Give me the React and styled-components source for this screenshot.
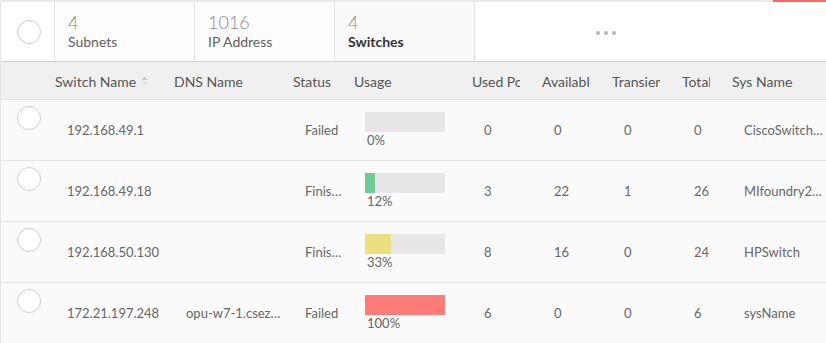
import React from 'react';
import styled, { createGlobalStyle } from 'styled-components';

const GlobalStyle = createGlobalStyle`
  body {
    margin: 0;
    background: #fff;
    font-family: Lato, "Open Sans", sans-serif;
  }
`;

const COLS = '45px 119px 119px 61px 118px 70px 70px 70px 50px 104px';

const tabs = [
  { count: 4, label: 'Subnets' },
  { count: 1016, label: 'IP Address' },
  { count: 4, label: 'Switches', active: true },
];

const columns = ['Switch Name', 'DNS Name', 'Status', 'Usage', 'Used Ports', 'Available', 'Transient', 'Total', 'Sys Name'];

const rows = [
  { name: '192.168.49.1', dns: '', status: 'Failed', usage: 0, used: 0, avail: 0, trans: 0, total: 0, sys: 'CiscoSwitch-Core-01' },
  { name: '192.168.49.18', dns: '', status: 'Finished', usage: 12, used: 3, avail: 22, trans: 1, total: 26, sys: 'MIfoundry24-Edge' },
  { name: '192.168.50.130', dns: '', status: 'Finished', usage: 33, used: 8, avail: 16, trans: 0, total: 24, sys: 'HPSwitch' },
  { name: '172.21.197.248', dns: 'opu-w7-1.csez.zohocorpin.com', status: 'Failed', usage: 100, used: 6, avail: 0, trans: 0, total: 6, sys: 'sysName' },
];

const barColor = pct => {
  if (pct >= 80) return '#ff7b78';
  if (pct >= 25) return '#ebe07f';
  return '#6ccb96';
};

export default function App() {
  return (
    <Page>
      <GlobalStyle />
      <TopStrip>
        <RedMark />
      </TopStrip>

      <TabBar>
        <CheckCell>
          <Circle />
        </CheckCell>
        {tabs.map(tab => (
          <Tab key={tab.label} active={tab.active}>
            <TabCount>{tab.count}</TabCount>
            <TabLabel active={tab.active}>{tab.label}</TabLabel>
          </Tab>
        ))}
        <More>
          <Dot />
          <Dot />
          <Dot />
        </More>
      </TabBar>

      <HeadRow>
        <span />
        {columns.map((col, i) => (
          <HeadCell key={col}>
            {col}
            {i === 0 && (
              <SortIcon width="7" height="10" viewBox="0 0 7 10">
                <path d="M3.5 0.5 L6.5 4 L0.5 4 Z" fill="#c9c9c9" />
                <path d="M3.5 9.5 L6.5 6 L0.5 6 Z" fill="#e0e0e0" />
              </SortIcon>
            )}
          </HeadCell>
        ))}
      </HeadRow>

      {rows.map(row => (
        <Row key={row.name}>
          <RowCheck>
            <Circle />
          </RowCheck>
          <Cell>{row.name}</Cell>
          <Cell>{row.dns}</Cell>
          <Cell>{row.status}</Cell>
          <UsageCell>
            <Track>
              <Fill style={{ width: `${row.usage}%`, background: barColor(row.usage) }} />
            </Track>
            <Percent>{row.usage}%</Percent>
          </UsageCell>
          <Cell>{row.used}</Cell>
          <Cell>{row.avail}</Cell>
          <Cell>{row.trans}</Cell>
          <Cell>{row.total}</Cell>
          <Cell>{row.sys}</Cell>
        </Row>
      ))}
    </Page>
  );
}

const Page = styled.div`
  width: 826px;
  height: 343px;
  overflow: hidden;
  background: #fafafa;
  border-left: 1px solid #e6e6e6;
  box-sizing: border-box;
`;

const TopStrip = styled.div`
  height: 2px;
  background: #e9e9e9;
  display: flex;
  justify-content: flex-end;
`;

const RedMark = styled.div`
  width: 53px;
  height: 2px;
  background: #ff6666;
`;

const TabBar = styled.div`
  display: flex;
  height: 59px;
  background: #fff;
  border-bottom: 1px solid #cfcfcf;
`;

const CheckCell = styled.div`
  width: 54px;
  display: flex;
  align-items: center;
  padding-left: 16px;
  box-sizing: border-box;
  border-right: 1px solid #e3e3e3;
`;

const Circle = styled.div`
  width: 22px;
  height: 22px;
  border-radius: 50%;
  border: 1px solid #cdcdcd;
  background: #fff;
`;

const Tab = styled.div`
  width: 140px;
  box-sizing: border-box;
  padding: 9px 0 0 13px;
  border-right: 1px solid #e3e3e3;
  background: ${p => (p.active ? '#fafafa' : '#fdfdfd')};
`;

const TabCount = styled.div`
  font-size: 18px;
  font-weight: 300;
  color: #8a8a8a;
  line-height: 22px;
`;

const TabLabel = styled.div`
  font-size: 14px;
  line-height: 18px;
  color: ${p => (p.active ? '#333' : '#606060')};
  font-weight: ${p => (p.active ? 700 : 400)};
`;

const More = styled.div`
  width: 262px;
  display: flex;
  justify-content: center;
  align-items: center;
  gap: 4px;
  padding-top: 3px;
`;

const Dot = styled.span`
  width: 4px;
  height: 4px;
  border-radius: 50%;
  background: #b3b5c0;
`;

const HeadRow = styled.div`
  display: grid;
  grid-template-columns: ${COLS};
  height: 37px;
  align-items: center;
  background: #f0f0f0;
  border-bottom: 1px solid #e6e6e6;
`;

const HeadCell = styled.div`
  padding-left: 9px;
  margin-right: 13px;
  padding-top: 1px;
  font-size: 14px;
  color: #555;
  white-space: nowrap;
  overflow: hidden;
  display: flex;
  align-items: center;
  gap: 5px;
`;

const SortIcon = styled.svg`
  flex-shrink: 0;
`;

const Row = styled.div`
  display: grid;
  grid-template-columns: ${COLS};
  height: 60px;
  align-items: center;
  border-bottom: 1px solid #e3e3e3;
  background: #fafafa;
`;

const RowCheck = styled.div`
  align-self: start;
  padding: 6px 0 0 16px;
`;

const Cell = styled.div`
  padding: 0 2px 0 21px;
  font-size: 13px;
  color: #666;
  white-space: nowrap;
  overflow: hidden;
  text-overflow: ellipsis;
`;

const UsageCell = styled.div`
  padding-left: 20px;
  display: flex;
  flex-direction: column;
`;

const Track = styled.div`
  width: 80px;
  height: 20px;
  background: #e8e6e9;
  display: flex;
`;

const Fill = styled.div`
  height: 100%;
`;

const Percent = styled.div`
  font-size: 13px;
  color: #666;
  line-height: 16px;
  padding-left: 2px;
`;
